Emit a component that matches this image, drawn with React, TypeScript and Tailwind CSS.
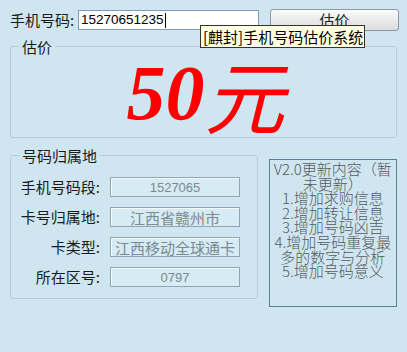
import React from "react"

const cjk = { fontFamily: '"Noto Sans CJK SC", "Liberation Sans", sans-serif' }

const infoRows = [
  { label: "手机号码段:", value: "1527065", small: true },
  { label: "卡号归属地:", value: "江西省赣州市", small: false },
  { label: "卡类型:", value: "江西移动全球通卡", small: false },
  { label: "所在区号:", value: "0797", small: true },
]

const updates = [
  "V2.0更新内容（暂",
  "未更新）",
  "1.增加求购信息",
  "2.增加转让信息",
  "3.增加号码凶吉",
  "4.增加号码重复最",
  "多的数字与分析",
  "5.增加号码意义",
]

const App: React.FC = () => {
  return (
    <div className="relative w-[407px] h-[352px] overflow-hidden bg-[#cfe6f0] text-[#1a1a1a]" style={cjk}>
      {/* top row */}
      <div className="flex items-center pt-[9px] pl-[10px] h-[31px]">
        <span className="w-[68px] text-[15px] leading-[20px]">手机号码:</span>
        <div className="w-[181px] h-[20px] bg-white border border-[#7f9db9] flex items-center pl-[2px]">
          <span className="text-[13.5px] leading-none text-black" style={{ fontFamily: '"Liberation Sans", sans-serif' }}>
            15270651235
          </span>
          <span className="w-px h-[15px] bg-black ml-px" />
        </div>
        <button className="ml-[11px] w-[129px] h-[22px] rounded-[3px] border border-[#8a9aa6] bg-gradient-to-b from-[#fbfbfb] to-[#dcdcdc] text-[15px] leading-[20px] text-[#222]">
          估价
        </button>
      </div>

      {/* tooltip */}
      <div className="absolute left-[200px] top-[25px] w-[165px] h-[23px] bg-[#ffffe1] border border-[#333] flex items-center pl-[2px] text-[15px] leading-none text-black whitespace-nowrap z-10">
        [麒封]手机号码估价系统
      </div>

      {/* estimate group */}
      <fieldset className="mx-[10px] mt-[6px] h-[101px] border border-[#b5ccd6] rounded-[3px] px-0">
        <legend className="ml-[8px] px-[3px] text-[15px] leading-[19px]">估价</legend>
        <div className="flex justify-center items-center h-[80px] -mt-[3px] pl-[4px] text-[#ff0000] italic font-bold leading-none">
          <span className="text-[78px]" style={{ fontFamily: '"Liberation Serif", serif' }}>50</span>
          <span className="text-[80px] font-normal" style={{ fontFamily: '"Noto Sans CJK SC", serif' }}>元</span>
        </div>
      </fieldset>

      {/* bottom */}
      <div className="flex mt-[8px] px-[10px] gap-[11px] items-start">
        <fieldset className="w-[249px] h-[153px] border border-[#b5ccd6] rounded-[3px] px-0">
          <legend className="ml-[8px] px-[3px] text-[15px] leading-[19px]">号码归属地</legend>
          <div className="flex flex-col gap-[10px] pt-[12px]">
            {infoRows.map((r) => (
              <div key={r.label} className="flex items-center">
                <span className="w-[90px] text-right text-[15px] leading-[20px] pr-[1px]">{r.label}</span>
                <div className="ml-[9px] w-[130px] h-[20px] border border-[#8ea7b3] shadow-[inset_1px_1px_0_#f4fafc] bg-[#d6ebf3] flex items-center justify-center">
                  <span
                    className={r.small ? "text-[13px] leading-none text-[#7a8a90]" : "text-[15px] leading-none text-[#7a8a90] whitespace-nowrap"}
                    style={r.small ? { fontFamily: '"Liberation Sans", sans-serif' } : undefined}
                  >
                    {r.value}
                  </span>
                </div>
              </div>
            ))}
          </div>
        </fieldset>
        <div className="mt-[13px] w-[129px] h-[148px] border border-[#5f7f93] pt-[2px] flex flex-col items-center text-[15px] leading-[14.6px] text-[#555b60] font-light">
          {updates.map((u) => (
            <div key={u} className="whitespace-nowrap">{u}</div>
          ))}
        </div>
      </div>
    </div>
  )
}

export default App
